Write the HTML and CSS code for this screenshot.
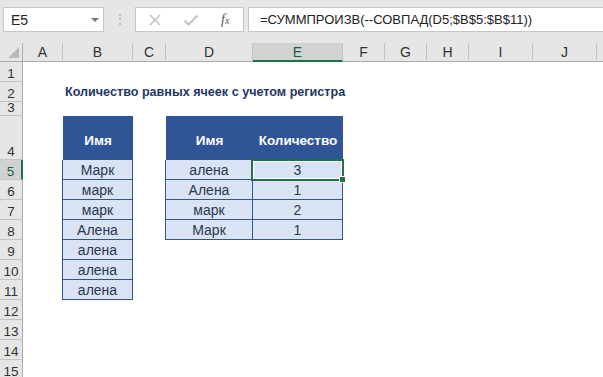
FILE: index.html
```html
<!DOCTYPE html>
<html lang="ru">
<head>
    <meta charset="UTF-8">
    <title>Количество равных ячеек с учетом регистра</title>
    <link rel="stylesheet" href="styles.css">
</head>
<body>
<div class="bar">
    <div class="name_box">
        <span>E5</span>
        <span class="drop"></span>
    </div>
    <div class="dots">&#8942;</div>
    <div class="fx_box">
        <svg width="14" height="14" viewBox="0 0 14 14"><path d="M2 2 L12 12 M12 2 L2 12" stroke="#c3c3c3" stroke-width="1.6" fill="none"/></svg>
        <svg width="16" height="14" viewBox="0 0 16 14"><path d="M1.5 7.5 L5.5 11.5 L14.5 2.5" stroke="#c3c3c3" stroke-width="2" fill="none"/></svg>
        <span class="fx">f<sub>x</sub></span>
    </div>
    <div class="formula">=СУММПРОИЗВ(--СОВПАД(D5;$B$5:$B$11))</div>
</div>

<div class="sheet">
    <!-- заголовки столбцов -->
    <div class="corner"><span class="tri"></span></div>
    <div class="col_head">A</div>
    <div class="col_head">B</div>
    <div class="col_head">C</div>
    <div class="col_head">D</div>
    <div class="col_head col_sel">E</div>
    <div class="col_head">F</div>
    <div class="col_head">G</div>
    <div class="col_head">H</div>
    <div class="col_head">I</div>
    <div class="col_head">J</div>
    <div class="col_head col_last"></div>

    <!-- номера строк -->
    <div class="row_head" style="grid-row: 2">1</div>
    <div class="row_head" style="grid-row: 3">2</div>
    <div class="row_head" style="grid-row: 4">3</div>
    <div class="row_head" style="grid-row: 5">4</div>
    <div class="row_head row_sel" style="grid-row: 6">5</div>
    <div class="row_head" style="grid-row: 7">6</div>
    <div class="row_head" style="grid-row: 8">7</div>
    <div class="row_head" style="grid-row: 9">8</div>
    <div class="row_head" style="grid-row: 10">9</div>
    <div class="row_head" style="grid-row: 11">10</div>
    <div class="row_head" style="grid-row: 12">11</div>
    <div class="row_head" style="grid-row: 13">12</div>
    <div class="row_head" style="grid-row: 14">13</div>
    <div class="row_head" style="grid-row: 15">14</div>
    <div class="row_head" style="grid-row: 16">15</div>

    <div class="title">Количество равных ячеек с учетом регистра</div>

    <!-- таблица 1 -->
    <div class="th th_b">Имя</div>
    <div class="td td_b" style="grid-row: 6">Марк</div>
    <div class="td td_b" style="grid-row: 7">марк</div>
    <div class="td td_b" style="grid-row: 8">марк</div>
    <div class="td td_b" style="grid-row: 9">Алена</div>
    <div class="td td_b" style="grid-row: 10">алена</div>
    <div class="td td_b" style="grid-row: 11">алена</div>
    <div class="td td_b" style="grid-row: 12">алена</div>

    <!-- таблица 2 -->
    <div class="th th_d">Имя</div>
    <div class="th th_e">Количество</div>
    <div class="td td_d" style="grid-row: 6">алена</div>
    <div class="td td_e sel" style="grid-row: 6">3</div>
    <div class="td td_d" style="grid-row: 7">Алена</div>
    <div class="td td_e" style="grid-row: 7">1</div>
    <div class="td td_d" style="grid-row: 8">марк</div>
    <div class="td td_e" style="grid-row: 8">2</div>
    <div class="td td_d" style="grid-row: 9">Марк</div>
    <div class="td td_e" style="grid-row: 9">1</div>
</div>
</body>
</html>
```

FILE: styles.css
```css
body{
    margin: 0;
    width: 603px;
    height: 377px;
    overflow: hidden;
    background: white;
    font-family: "Liberation Sans", Arial, sans-serif;
}

/*строка формул*/
.bar{
    height: 43px;
    background: #e6e6e6;
    display: flex;
    align-items: flex-start;
    padding-top: 7px;
    box-sizing: border-box;
}
.name_box{
    margin-left: 3px;
    width: 101px;
    height: 25px;
    background: white;
    border: 1px solid #c6c6c6;
    box-sizing: border-box;
    display: flex;
    align-items: center;
    justify-content: space-between;
    padding: 0 4px 0 7px;
    font-size: 14px;
    color: #222;
}
.drop{
    width: 0;
    height: 0;
    border-left: 4px solid transparent;
    border-right: 4px solid transparent;
    border-top: 4px solid #777;
}
.dots{
    width: 31px;
    text-align: center;
    color: #b0b0b0;
    font-size: 14px;
    line-height: 25px;
}
.fx_box{
    width: 109px;
    height: 25px;
    background: white;
    border: 1px solid #c6c6c6;
    box-sizing: border-box;
    display: flex;
    align-items: center;
    padding-left: 12px;
    gap: 21px;
}
.fx{
    font-family: "Liberation Serif", serif;
    font-style: italic;
    font-size: 14px;
    color: #555;
    margin-left: 1px;
}
.fx sub{
    font-size: 10px;
    vertical-align: 0;
}
.formula{
    flex: 1;
    margin-left: 4px;
    height: 25px;
    background: white;
    border: 1px solid #c6c6c6;
    border-right: none;
    box-sizing: border-box;
    padding-left: 11px;
    font-size: 13px;
    line-height: 23px;
    color: #222;
    white-space: nowrap;
}

/*лист*/
.sheet{
    display: grid;
    grid-template-columns: 23px 40px 70px 33px 87px 90px 42px 42px 42px 64px 64px 1fr;
    grid-template-rows: 19px 20px 20px 14px 44px repeat(11, 20px);
    font-size: 14px;
}
.corner{
    background: #e6e6e6;
    border-right: 1px solid #ababab;
    border-bottom: 1px solid #ababab;
    box-sizing: border-box;
    position: relative;
}
.tri{
    position: absolute;
    right: 3px;
    bottom: 3px;
    width: 0;
    height: 0;
    border-left: 11px solid transparent;
    border-bottom: 11px solid #b9b9b9;
}
.col_head{
    background: #e6e6e6;
    border-right: 1px solid #c3c3c3;
    border-bottom: 1px solid #ababab;
    box-sizing: border-box;
    text-align: center;
    line-height: 19px;
    color: #333;
}
.col_last{
    border-right: none;
}
.col_sel{
    background: #d2d2d2;
    border-bottom: 2px solid #217346;
    color: #1e5e3b;
}
.row_head{
    grid-column: 1;
    background: #e6e6e6;
    border-right: 1px solid #ababab;
    border-bottom: 1px solid #c3c3c3;
    box-sizing: border-box;
    display: flex;
    align-items: flex-end;
    justify-content: center;
    padding-bottom: 1px;
    line-height: 12px;
    font-size: 13.5px;
    color: #333;
}
.row_sel{
    background: #d2d2d2;
    border-right: 2px solid #217346;
    color: #1e5e3b;
}

.title{
    grid-column: 3 / 9;
    grid-row: 3;
    font-weight: bold;
    font-size: 12.6px;
    color: #1f3864;
    padding-left: 2px;
    display: flex;
    align-items: flex-end;
    padding-bottom: 3px;
    line-height: 14px;
    white-space: nowrap;
}

/*таблицы*/
.th{
    grid-row: 5;
    background: #2f5597;
    color: white;
    font-weight: bold;
    font-size: 13.5px;
    display: flex;
    align-items: center;
    justify-content: center;
    padding-top: 4px;
    box-sizing: border-box;
}
.th_b{ grid-column: 3; }
.th_d{ grid-column: 5; }
.th_e{ grid-column: 6; }

.td{
    background: #dae3f3;
    color: #2a3752;
    border-right: 1px solid #2f5597;
    border-bottom: 1px solid #2f5597;
    box-sizing: border-box;
    display: flex;
    align-items: center;
    justify-content: center;
    padding-top: 1px;
}
.td_b{ grid-column: 3; border-left: 1px solid #2f5597; margin-left: -1px; }
.td_d{ grid-column: 5; border-left: 1px solid #2f5597; margin-left: -1px; }
.td_e{ grid-column: 6; }

/*выделенная ячейка*/
.sel{
    position: relative;
}
.sel::after{
    content: "";
    position: absolute;
    left: -2px;
    top: -1px;
    right: -2px;
    bottom: -2px;
    border: 2px solid #217346;
    box-shadow: inset 0 0 0 1px white;
}
.sel::before{
    content: "";
    position: absolute;
    right: -4px;
    bottom: -4px;
    width: 5px;
    height: 5px;
    background: #217346;
    border: 1px solid white;
    z-index: 1;
}
```
